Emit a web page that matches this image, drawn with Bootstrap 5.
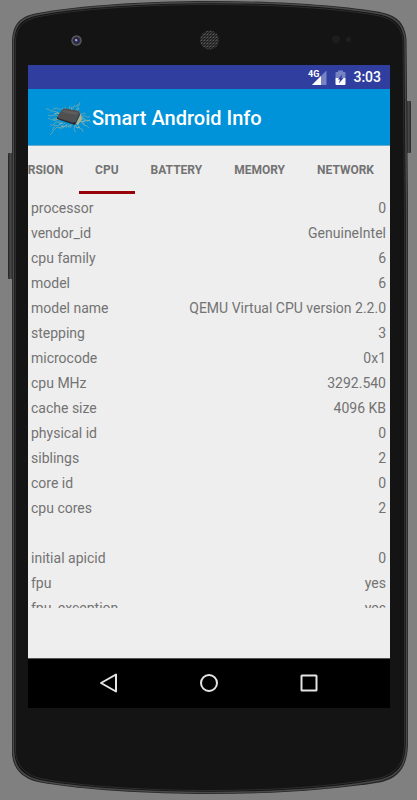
<!DOCTYPE html>
<html lang="en">
<head>
<meta charset="utf-8">
<meta name="viewport" content="width=device-width, initial-scale=1">
<title>Smart Android Info</title>
<link href="https://cdn.jsdelivr.net/npm/bootstrap@5.3.0/dist/css/bootstrap.min.css" rel="stylesheet">
<style>
  body { background: #808080; font-family: Roboto, "Noto Sans", sans-serif; }
  .device { padding: 65px 27px 92px 28px; }
  .device-frame { z-index: 0; }
  .screen { z-index: 1; background: #eee; color: #737373; }
  .status-bar { height: 24px; background: #303f9f; padding: 1px 9px 0 0; gap: 7px; color: #fff; font-size: 14px; font-weight: 500; }
  .app-bar { height: 57px; background: #0093d9; padding: 2px 0 0 16px; border-bottom: 1px solid #6fa9c8; }
  .app-title { color: #fff; font-size: 20px; font-weight: 500; line-height: 24px; }
  .tab-strip { height: 48px; }
  .tab-strip .nav-link { height: 48px; padding: 3px 16px 0; border: 0 solid transparent; border-bottom-width: 3px; border-radius: 0; background: transparent; color: #737373; font-size: 12px; font-weight: 700; line-height: 16px; }
  .tab-strip .nav-link.active { border-color: #98000a; }
  .info-pane { margin: 0 4px 50px 3px; padding-top: 1px; min-height: 0; }
  .info-table th, .info-table td { height: 25px; padding: 1px 0 0; font-size: 14px; line-height: 24px; font-weight: 400; }
  .nav-keys { height: 50px; background: #000; border-top: 1px solid #555; padding: 0 30px 2px; }
  .nav-keys .btn { width: 100px; padding: 0; border: 0; }
</style>
<script src="https://cdn.jsdelivr.net/npm/bootstrap@5.3.0/dist/js/bootstrap.bundle.min.js"></script>
</head>
<body>
<main class="device vh-100 d-flex flex-column position-relative overflow-hidden">
  <svg class="device-frame position-absolute top-0 start-0 w-100 h-100" viewBox="0 0 417 800" preserveAspectRatio="none" aria-hidden="true">
    <defs>
      <linearGradient id="key" x1="0" x2="1"><stop offset="0" stop-color="#222"/><stop offset=".5" stop-color="#484848"/><stop offset="1" stop-color="#2a2a2a"/></linearGradient>
      <radialGradient id="lens"><stop offset="0" stop-color="#6c68c8"/><stop offset=".35" stop-color="#24224c"/><stop offset=".6" stop-color="#33333a"/><stop offset=".85" stop-color="#64646a"/><stop offset="1" stop-color="#222"/></radialGradient>
      <pattern id="mesh" width="3" height="3" patternUnits="userSpaceOnUse"><rect width="3" height="3" fill="#1b1b1b"/><path d="M0 0h2M1.500 2h1.500M.5 1v1" stroke="#666" stroke-width=".8"/></pattern>
    </defs>
    <rect x="8" y="153" width="5" height="126" rx="1" fill="url(#key)"/>
    <rect x="406" y="101" width="5" height="52" rx="1" fill="url(#key)"/>
    <path d="M12 40C13 24 20 17 35 13.500C80 5 150 1 210 1C275 1 340 5 382 12.500C398 16 405 24 406.500 40L408 210V745C407 766 400 777 382 782C335 790 270 794 210 794C150 794 80 790 38 782C20 778 12 766 12 752Z" fill="#262626"/>
    <path d="M13.500 40C14.500 25 21 18.500 36 15C80 6.500 150 2.500 210 2.500C275 2.500 340 6.500 381 14C396 17.500 403.500 25 405 40L406.500 210V745C405.500 765 399 775 381 780C335 788.500 270 792.500 210 792.500C150 792.500 80 788.500 39 780.500C21 776 13.500 765 13.500 751Z" fill="#131313" stroke="#484949" stroke-width="1.500"/>
    <path d="M15.500 40C16.500 27 23 20.500 37 17C80 8.500 150 4.500 210 4.500C275 4.500 340 8.500 380 16C394 19.500 401.500 27 403 40L404.500 210V745C403.500 763 397 773 380 778C335 786.500 270 790.500 210 790.500C150 790.500 80 786.500 40 778.500C23 774 15.500 763 15.500 750Z" fill="#141414" stroke="#2c2d2e"/>
    <circle cx="76.500" cy="40.500" r="5.500" fill="url(#lens)"/>
    <circle cx="76" cy="40" r="1" fill="#b4b4ee"/>
    <circle cx="209.500" cy="40" r="9.500" fill="url(#mesh)"/>
    <circle cx="336" cy="39.500" r="4" fill="#1e1c1c"/>
    <circle cx="348.500" cy="39.500" r="2.500" fill="#201e1e"/>
  </svg>

  <section class="screen d-flex flex-column flex-grow-1 overflow-hidden position-relative">
    <div class="status-bar d-flex align-items-center justify-content-end flex-shrink-0">
      <svg width="20" height="16" viewBox="-2 0 20 16" role="img" aria-label="4G signal">
        <path d="M2 15L16.500 .5V15Z" fill="#7883c4"/>
        <path d="M2 15L11 6V15Z" fill="#fff"/>
        <text x="-2" y="7" font-size="9" font-weight="700" fill="#fff" stroke="#303f9f" stroke-width="1.500" paint-order="stroke">4G</text>
      </svg>
      <svg width="11" height="16" viewBox="0 0 11 16" role="img" aria-label="Battery charging">
        <path d="M1.500 2H3V.5H8V2H9.500Q10.500 2 10.500 3V8H.5V3Q.5 2 1.500 2Z" fill="#7883c4"/>
        <path d="M.5 8H10.500V14Q10.500 15 9.500 15H1.500Q.5 15 .5 14Z" fill="#fff"/>
        <path d="M7.500 4L2.800 9.500H5L3.900 13.500L8.500 8H6.300Z" fill="#303f9f"/>
      </svg>
      <span>3:03</span>
    </div>

    <header class="app-bar d-flex align-items-center flex-shrink-0">
      <svg width="48" height="38" viewBox="-1 1 48 38" aria-hidden="true">
        <g fill="none" stroke="#8fae9f" stroke-width=".8" stroke-linejoin="round" opacity=".8">
          <path d="M16 12L12 10 8 11M14 15L9 13H6L3 11 1 11M15 18L10 17 6 18 3 17M15 22L10 20 7 22 3 20M16 24L11 24 8 27H5M18 24L13 28 10 27 8 31V34L5 37M20 25L15 30 12 29 9 32M22 26L18 30 14 30M24 26L21 30M27 26L25 30M30 26L29 32 31 34M32 24L34 30 37 31 38 34M34 22L39 27 42 28 44 30M34 20L40 23 43 22 46 24M35 18L40 18 42 19H45M34 17L39 15 41 16M35 22L38 24 40 28M33 15L35 13M30 13L33 9 34 7 35 4M27 12L29 8 32 8 33 6M24 11L25 8M21 12L20 9"/>
          <path stroke="#c6c79e" d="M15 20L11 22H8M18 25L14 26M22 27L19 29 16 28M26 27L23 29M30 27L32 30 35 29M34 22L37 24 40 23M35 19L38 20 42 23 45 22M34 17L37 18M32 13L34 10M26 12L27 9M19 12L17 10M15 16L12 15 9 16"/>
        </g>
        <path d="M32 12L35 17 31 26 33 27 37 21 35 15Z" fill="#b4b28a"/>
        <path d="M12 19L30 24V27L12 21Z" fill="#29292b"/>
        <path d="M30 24L35 14V17L30 27Z" fill="#3a3a3b"/>
        <path d="M19 10.500Q25 11 34 13Q35 13.500 34.500 15L30 23.500Q29 25 27 24.500L13 20Q12 19.500 12.500 18L17 12Q18 10.500 19 10.500Z" fill="#505051"/>
        <path d="M19 12L33 14.500 32 17 17 14Z" fill="#5e5e5f"/>
      </svg>
      <h1 class="app-title mb-0">Smart Android Info</h1>
    </header>

    <nav class="tab-strip nav flex-nowrap justify-content-end overflow-hidden flex-shrink-0" role="tablist">
      <button class="nav-link" type="button" role="tab">VERSION</button>
      <button class="nav-link active" type="button" role="tab" aria-selected="true">CPU</button>
      <button class="nav-link" type="button" role="tab">BATTERY</button>
      <button class="nav-link" type="button" role="tab">MEMORY</button>
      <button class="nav-link" type="button" role="tab">NETWORK</button>
    </nav>

    <div class="info-pane flex-grow-1 overflow-hidden">
      <table class="info-table w-100">
        <tbody>
          <tr><th scope="row">processor</th><td class="text-end">0</td></tr>
          <tr><th scope="row">vendor_id</th><td class="text-end">GenuineIntel</td></tr>
          <tr><th scope="row">cpu family</th><td class="text-end">6</td></tr>
          <tr><th scope="row">model</th><td class="text-end">6</td></tr>
          <tr><th scope="row">model name</th><td class="text-end">QEMU Virtual CPU version 2.2.0</td></tr>
          <tr><th scope="row">stepping</th><td class="text-end">3</td></tr>
          <tr><th scope="row">microcode</th><td class="text-end">0x1</td></tr>
          <tr><th scope="row">cpu MHz</th><td class="text-end">3292.540</td></tr>
          <tr><th scope="row">cache size</th><td class="text-end">4096 KB</td></tr>
          <tr><th scope="row">physical id</th><td class="text-end">0</td></tr>
          <tr><th scope="row">siblings</th><td class="text-end">2</td></tr>
          <tr><th scope="row">core id</th><td class="text-end">0</td></tr>
          <tr><th scope="row">cpu cores</th><td class="text-end">2</td></tr>
          <tr><td colspan="2"></td></tr>
          <tr><th scope="row">initial apicid</th><td class="text-end">0</td></tr>
          <tr><th scope="row">fpu</th><td class="text-end">yes</td></tr>
          <tr><th scope="row">fpu_exception</th><td class="text-end">yes</td></tr>
        </tbody>
      </table>
    </div>

    <div class="nav-keys d-flex justify-content-center align-items-center flex-shrink-0">
      <button class="btn" type="button" aria-label="Back"><svg class="d-block mx-auto" width="20" height="20" viewBox="0 0 20 20"><path d="M17 1.500V18.500L2 10Z" fill="none" stroke="#e4e4e4" stroke-width="2" stroke-linejoin="round"/></svg></button>
      <button class="btn" type="button" aria-label="Home"><svg class="d-block mx-auto" width="20" height="20" viewBox="0 0 20 20"><circle cx="10" cy="10" r="8" fill="none" stroke="#e4e4e4" stroke-width="2"/></svg></button>
      <button class="btn" type="button" aria-label="Recent apps"><svg class="d-block mx-auto" width="20" height="20" viewBox="0 0 20 20"><rect x="2.500" y="2.500" width="15" height="15" rx=".5" fill="none" stroke="#e4e4e4" stroke-width="2"/></svg></button>
    </div>
  </section>
</main>
</body>
</html>
